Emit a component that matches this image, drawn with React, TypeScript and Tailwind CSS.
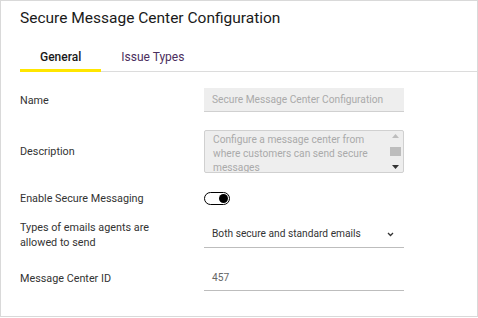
// Secure Message Center – general configuration panel
import React, { useState } from 'react';

const font = { fontFamily: 'Roboto, "Noto Sans", sans-serif' };

function Row({ label, className, children }: { label: React.ReactNode; className: string; children: React.ReactNode }) {
  return (
    <div className={`flex items-center ${className}`}>
      <div className="w-[184px] shrink-0 text-[10.8px] leading-[15px] text-[#333]">{label}</div>
      <div className="w-[200px] h-full flex items-center">{children}</div>
    </div>
  );
}

export default function App() {
  const [tab, setTab] = useState<'general' | 'issues'>('general');
  const [enabled, setEnabled] = useState(true);

  return (
    <div style={font} className="w-[478px] h-[317px] bg-white border border-[#d9d9d9] overflow-hidden">
      <h1 className="pl-[19px] pt-[6px] h-[30px] text-[15.5px] leading-[22px] text-[#1a1a1a]">
        Secure Message Center Configuration
      </h1>

      {/* Tabs */}
      <div className="ml-[19px] mt-[12px] flex border-b border-[#dcdcdc]">
        <button
          onClick={() => setTab('general')}
          className={`px-5 h-[29px] pt-[1px] text-[12px] font-medium -mb-px border-b-[3px] ${tab === 'general' ? 'border-[#ffe600] text-[#1a1a1a]' : 'border-transparent text-[#4b2e5e]'}`}
        >
          General
        </button>
        <button
          onClick={() => setTab('issues')}
          className={`px-5 h-[29px] pt-[1px] text-[12px] -mb-px border-b-[3px] ${tab === 'issues' ? 'border-[#ffe600] text-[#1a1a1a]' : 'border-transparent text-[#4b2e5e]'}`}
        >
          Issue Types
        </button>
      </div>

      <div className="pl-[19px]">
        <Row label="Name" className="mt-[16px] h-[24px]">
          <div className="w-full h-full bg-[#eeeeee] border-b border-[#d0d0d0] px-2 flex items-center whitespace-nowrap text-[10.2px] text-[#aaaaaa]">
            Secure Message Center Configuration
          </div>
        </Row>

        <Row label="Description" className="mt-[18px] h-[43px]">
          <div className="w-full h-full bg-[#eeeeee] border border-[#d0d0d0] rounded-[2px] flex overflow-hidden">
            <div className="flex-1 pl-2 pr-4 pt-[2px] text-[10.2px] leading-[14px] text-[#aaaaaa]">
              Configure a message center from where customers can send secure messages
            </div>
            <div className="w-[14px] flex flex-col items-center justify-between py-[3px] mr-[1px]">
              <svg width="7" height="4" viewBox="0 0 7 4"><path d="M3.5 0L7 4H0z" fill="#bdbdbd" /></svg>
              <div className="w-[11px] h-[9px] bg-[#bdbdbd]" />
              <svg width="7" height="4" viewBox="0 0 7 4"><path d="M0 0h7L3.5 4z" fill="#333" /></svg>
            </div>
          </div>
        </Row>

        <Row label="Enable Secure Messaging" className="mt-[15px] h-[20px]">
          <button
            onClick={() => setEnabled(!enabled)}
            className={`w-[26px] h-[13px] rounded-full border-[1.5px] border-black flex items-center px-[1px] ${enabled ? 'justify-end' : 'justify-start'}`}
          >
            <span className="w-[9px] h-[9px] rounded-full bg-black" />
          </button>
        </Row>

        <Row label={<>Types of emails agents are<br />allowed to send</>} className="mt-[13px] h-[27px]">
          <div className="w-full h-full border-b border-[#bdbdbd] pl-2 pr-[10px] flex items-center justify-between text-[10.2px] text-[#333]">
            <span className="pb-[1px]">Both secure and standard emails</span>
            <svg width="7" height="5" viewBox="0 0 7 5" className="mt-[1px]">
              <path d="M1 1l2.5 2.5L6 1" fill="none" stroke="#333" strokeWidth="1.3" />
            </svg>
          </div>
        </Row>

        <Row label="Message Center ID" className="mt-[18px] h-[25px]">
          <div className="w-full h-full border-b border-[#bdbdbd] pl-2 flex items-center text-[10.2px] text-[#666] pb-[1px]">
            457
          </div>
        </Row>
      </div>
    </div>
  );
}
